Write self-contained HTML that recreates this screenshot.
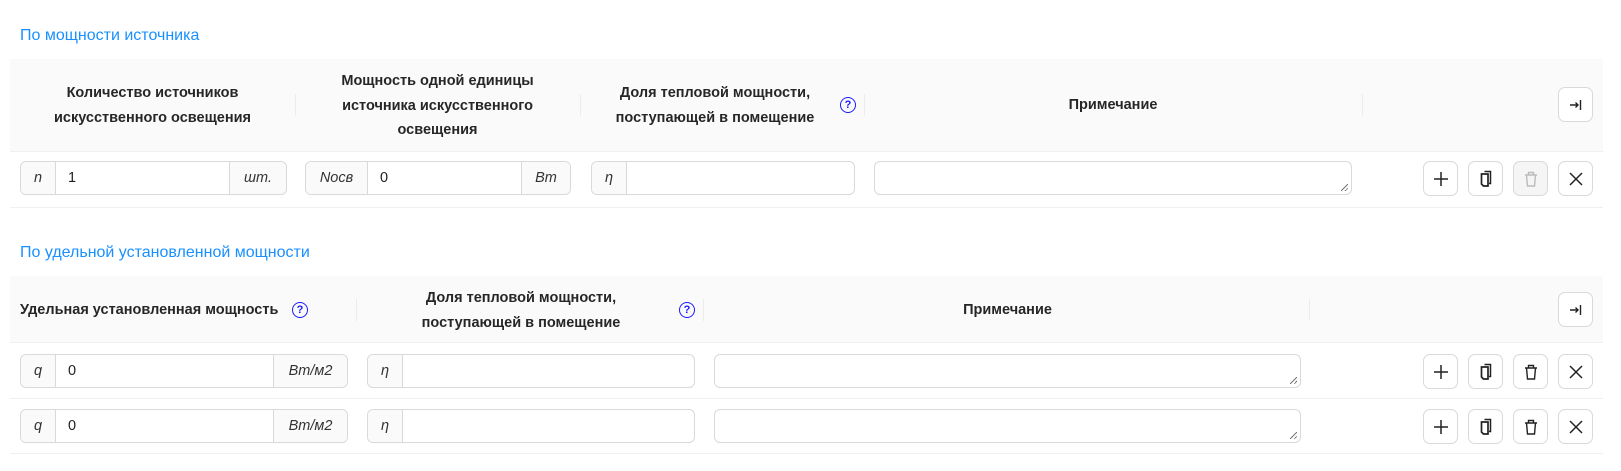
<!DOCTYPE html>
<html><head><meta charset="utf-8"><style>
*{box-sizing:border-box;margin:0;padding:0}
body{width:1621px;height:471px;background:#fff;font-family:"Liberation Sans","DejaVu Sans",sans-serif;color:#1f1f1f;position:relative;overflow:hidden}
.a{position:absolute}
.title{font-size:16px;color:#1890ff}
.hdr{background:#fafafa;border-bottom:1px solid #f0f0f0}
.line{height:1px;background:#f0f0f0}
.div{width:1px;height:22px;background:#ececec}
.ht{font-size:14.5px;font-weight:bold;line-height:24.5px;text-align:center;color:#262626}
.grp{display:flex;border:1px solid #d9d9d9;border-radius:6px;height:34px;overflow:hidden;font-size:14.5px}
.pre,.suf{background:#fafafa;display:flex;align-items:center;justify-content:center;font-style:italic;color:#333}
.pre{border-right:1px solid #d9d9d9}
.suf{border-left:1px solid #d9d9d9}
.val{flex:1;display:flex;align-items:center;padding-left:12px}
.ta{border:1px solid #d9d9d9;border-radius:6px;height:34px}
.ta:after{content:"";position:absolute;right:3px;bottom:3px;width:7px;height:7px;background:linear-gradient(135deg,transparent 45%,#777 45%,#777 55%,transparent 55%,transparent 75%,#777 75%,#777 85%,transparent 85%)}
.btn{width:35px;height:35px;border:1px solid #d9d9d9;border-radius:7px;background:#fff;display:flex;align-items:center;justify-content:center}
.btn.dis{background:#f5f5f5}
.q{width:16px;height:16px;border:1.5px solid #1a1aff;border-radius:50%;color:#1a1aff;font-size:11px;font-weight:bold;display:flex;align-items:center;justify-content:center}
</style></head><body>

<div class="a title" style="left:20px;top:27px">По мощности источника</div>
<div class="a hdr" style="left:10px;top:59px;width:1593px;height:93px"></div>
<div class="a div" style="left:295px;top:94px"></div>
<div class="a div" style="left:580px;top:94px"></div>
<div class="a div" style="left:864px;top:94px"></div>
<div class="a div" style="left:1362px;top:94px"></div>
<div class="a ht" style="left:20px;top:81px;width:265px">Количество источников<br>искусственного освещения</div>
<div class="a ht" style="left:305px;top:69px;width:265px">Мощность одной единицы<br>источника искусственного<br>освещения</div>
<div class="a ht" style="left:595px;top:81px;width:240px">Доля тепловой мощности,<br>поступающей в помещение</div>
<div class="a q" style="left:840px;top:97px">?</div>
<div class="a ht" style="left:874px;top:93px;width:478px">Примечание</div>
<div class="a btn" style="left:1558px;top:87px"><svg width="16" height="16" viewBox="0 0 16 16"><path d="M2 8h8M7.5 5.5L10 8l-2.5 2.5M12.5 3v10" stroke="#222" stroke-width="1.4" fill="none"/></svg></div>

<div class="a grp" style="left:20px;top:161px;width:267px"><div class="pre" style="width:35px">n</div><div class="val">1</div><div class="suf" style="width:57px">шт.</div></div>
<div class="a grp" style="left:305px;top:161px;width:266px"><div class="pre" style="width:62px">Nосв</div><div class="val">0</div><div class="suf" style="width:49px">Вт</div></div>
<div class="a grp" style="left:591px;top:161px;width:264px"><div class="pre" style="width:35px">η</div><div class="val"></div></div>
<div class="a ta" style="left:874px;top:161px;width:478px"></div>
<div class="a line" style="left:10px;top:207px;width:1593px"></div>

<div class="a title" style="left:20px;top:244px">По удельной установленной мощности</div>
<div class="a hdr" style="left:10px;top:276px;width:1593px;height:67px"></div>
<div class="a div" style="left:356px;top:299px"></div>
<div class="a div" style="left:703px;top:299px"></div>
<div class="a div" style="left:1309px;top:299px"></div>
<div class="a ht" style="left:20px;top:298px;white-space:nowrap;text-align:left">Удельная установленная мощность</div>
<div class="a q" style="left:292px;top:302px">?</div>
<div class="a ht" style="left:366px;top:286px;width:310px">Доля тепловой мощности,<br>поступающей в помещение</div>
<div class="a q" style="left:679px;top:302px">?</div>
<div class="a ht" style="left:714px;top:298px;width:587px">Примечание</div>
<div class="a btn" style="left:1558px;top:292px"><svg width="16" height="16" viewBox="0 0 16 16"><path d="M2 8h8M7.5 5.5L10 8l-2.5 2.5M12.5 3v10" stroke="#222" stroke-width="1.4" fill="none"/></svg></div>

<div class="a grp" style="left:20px;top:354px;width:328px"><div class="pre" style="width:35px">q</div><div class="val">0</div><div class="suf" style="width:74px">Вт/м2</div></div>
<div class="a grp" style="left:367px;top:354px;width:328px"><div class="pre" style="width:35px">η</div><div class="val"></div></div>
<div class="a ta" style="left:714px;top:354px;width:587px"></div>
<div class="a line" style="left:10px;top:398px;width:1593px"></div>

<div class="a grp" style="left:20px;top:409px;width:328px"><div class="pre" style="width:35px">q</div><div class="val">0</div><div class="suf" style="width:74px">Вт/м2</div></div>
<div class="a grp" style="left:367px;top:409px;width:328px"><div class="pre" style="width:35px">η</div><div class="val"></div></div>
<div class="a ta" style="left:714px;top:409px;width:587px"></div>
<div class="a line" style="left:10px;top:453px;width:1593px"></div>

<div id="b"></div>
<script>
var P='<svg width="18" height="18" viewBox="0 0 18 18"><path d="M9 2v14M2 9h14" stroke="#222" stroke-width="1.5"/></svg>';
var C='<svg width="18" height="18" viewBox="0 0 18 18"><path d="M7.5 1.5h6v12h-1.5" stroke="#222" stroke-width="1.5" fill="none"/><path d="M4.5 4h6.5v12H6.5L4.5 14z" stroke="#222" stroke-width="1.7" fill="none"/></svg>';
function T(c){return '<svg width="18" height="18" viewBox="0 0 18 18"><path d="M3 5h12M6.5 5V2.5h5V5M4.5 5l1 11h7l1-11" stroke="'+c+'" stroke-width="1.4" fill="none"/></svg>';}
var X='<svg width="18" height="18" viewBox="0 0 18 18"><path d="M3 3l12 12M15 3L3 15" stroke="#222" stroke-width="1.5"/></svg>';
var rows=[161,354,409],h='';
rows.forEach(function(y,i){
h+='<div class="a btn" style="left:1423px;top:'+y+'px">'+P+'</div>';
h+='<div class="a btn" style="left:1468px;top:'+y+'px">'+C+'</div>';
h+='<div class="a btn'+(i==0?' dis':'')+'" style="left:1513px;top:'+y+'px">'+T(i==0?'#bbb':'#222')+'</div>';
h+='<div class="a btn" style="left:1558px;top:'+y+'px">'+X+'</div>';
});
document.getElementById('b').innerHTML=h;
</script>
</body></html>
